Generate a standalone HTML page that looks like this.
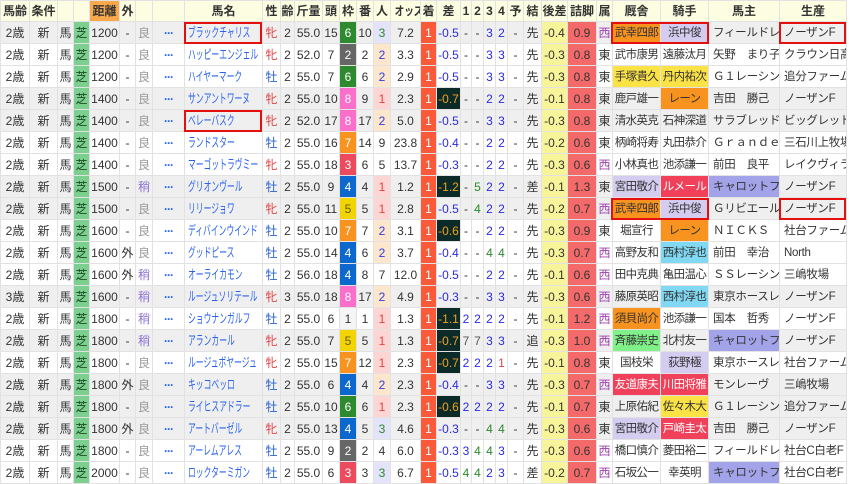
<!DOCTYPE html>
<html><head><meta charset="utf-8"><style>
*{margin:0;padding:0;box-sizing:border-box}
body{width:850px;height:482px;background:#fff;overflow:hidden;position:relative;font-family:"Liberation Sans","Noto Sans CJK JP",sans-serif;font-size:12px;color:#333}
table{border-collapse:collapse;table-layout:fixed;width:846px;position:absolute;left:0;top:0}
td,th{border:1px solid #e2e2e2;text-align:center;white-space:nowrap;overflow:hidden;height:22px;padding:0;line-height:20px}
th{background:#fdfde2;font-weight:bold;height:21px;color:#333}
th.ds{background:#f9a94b}
tr.g td{background:#efefef}
td.s,tr.g td.s{background:#7ccf8e;color:#1d4d28}
td.n{color:#2a62f0;text-align:left;padding-left:3px;font-size:13px}
.q{display:inline-block;transform:scaleX(.6);transform-origin:left center}
.q8{display:inline-block;transform:scaleX(.8);transform-origin:center}
.f{color:#e04545}.m{color:#2a62d0}
.yo{color:#999}.ya{color:#9070d8}
.dt{color:#2a62f0;font-weight:bold;letter-spacing:-1px}
td.w1{background:#f5f5f5}
td.w2,tr.g td.w2{background:#666;color:#fff}td.w3,tr.g td.w3{background:#ee4a5e;color:#fff}td.w4,tr.g td.w4{background:#0c68cc;color:#fff}
td.w5,tr.g td.w5{background:#f2d400;color:#6a5a00}td.w6,tr.g td.w6{background:#2e8a2e;color:#fff}td.w7,tr.g td.w7{background:#f7931e;color:#fff}td.w8,tr.g td.w8{background:#f96fca;color:#fff}
td.p1,tr.g td.p1{background:#fdd6d3;color:#e04545}td.p2,tr.g td.p2{background:#fde6cc;color:#2a3ee0}td.p3,tr.g td.p3{background:#e3e3fa;color:#2a8a2a}
td.c,tr.g td.c{background:#fb5a3a;color:#fff}
td.d,tr.g td.d{background:#0c2b28;color:#f0a020}
.b{color:#2a2ae8}.gr{color:#2a8a2a}.k{color:#555}.r{color:#e04545}
td.y,tr.g td.y{background:#f8f49a}
td.z,tr.g td.z{background:#f46a6a}
.ni{color:#a040b0}
td:nth-child(29),td:nth-child(30){letter-spacing:-0.6px;font-size:11.5px}
td.o,tr.g td.o{background:#f7931e}td.l,tr.g td.l{background:#d4cdf0}td.ye,tr.g td.ye{background:#fbe245}
td.rd,tr.g td.rd{background:#f0405a;color:#fff}td.cy,tr.g td.cy{background:#80d8f2}td.gn,tr.g td.gn{background:#80f088}td.pu,tr.g td.pu{background:#a3a3ea}
td.L{text-align:left;padding-left:4px;font-size:11.5px;letter-spacing:-0.3px}
.box{position:absolute;border:2px solid #e41010}
</style></head><body>
<table>
<colgroup><col style="width:29px"><col style="width:28px"><col style="width:16px"><col style="width:16px"><col style="width:30px"><col style="width:16px"><col style="width:17px"><col style="width:32px"><col style="width:78px"><col style="width:18px"><col style="width:14px"><col style="width:28px"><col style="width:17px"><col style="width:17px"><col style="width:17px"><col style="width:17px"><col style="width:30px"><col style="width:16px"><col style="width:24px"><col style="width:11px"><col style="width:12px"><col style="width:12px"><col style="width:12px"><col style="width:16px"><col style="width:18px"><col style="width:26px"><col style="width:29px"><col style="width:16px"><col style="width:48px"><col style="width:48px"><col style="width:71px"><col style="width:67px"></colgroup>
<tr><th>馬齢</th><th>条件</th><th></th><th></th><th class="ds">距離</th><th>外</th><th></th><th></th><th>馬名</th><th>性</th><th>齢</th><th>斤量</th><th>頭</th><th>枠</th><th>番</th><th>人</th><th><span class="q8">オッズ</span></th><th>着</th><th>差</th><th>1</th><th>2</th><th>3</th><th>4</th><th>予</th><th>結</th><th>後差</th><th>詰脚</th><th>属</th><th>厩舎</th><th>騎手</th><th>馬主</th><th>生産</th></tr>
<tr class="g"><td>2歳</td><td>新</td><td>馬</td><td class="s">芝</td><td>1200</td><td>-</td><td class="yo">良</td><td class="dt">···</td><td class="n"><span class="q">ブラックチャリス</span></td><td class="f">牝</td><td>2</td><td>55.0</td><td>15</td><td class="w6">6</td><td>10</td><td class="p3">3</td><td>7.2</td><td class="c">1</td><td class="b">-0.5</td><td>-</td><td>-</td><td class="b">3</td><td class="b">2</td><td>-</td><td>先</td><td class="y">-0.4</td><td class="z">0.9</td><td class="ni">西</td><td class="o">武幸四郎</td><td class="l">浜中俊</td><td class="L">フィールドレ</td><td class="L">ノーザンF</td></tr>
<tr><td>2歳</td><td>新</td><td>馬</td><td class="s">芝</td><td>1200</td><td>-</td><td class="yo">良</td><td class="dt">···</td><td class="n"><span class="q">ハッピーエンジェル</span></td><td class="f">牝</td><td>2</td><td>52.0</td><td>7</td><td class="w2">2</td><td>2</td><td class="p2">2</td><td>3.3</td><td class="c">1</td><td class="b">-0.5</td><td>-</td><td>-</td><td class="b">3</td><td class="b">3</td><td>-</td><td>先</td><td class="y">-0.3</td><td class="z">0.8</td><td>東</td><td>武市康男</td><td>遠藤汰月</td><td class="L">矢野　まり子</td><td class="L">クラウン日高</td></tr>
<tr><td>2歳</td><td>新</td><td>馬</td><td class="s">芝</td><td>1200</td><td>-</td><td class="yo">良</td><td class="dt">···</td><td class="n"><span class="q">ハイヤーマーク</span></td><td class="m">牡</td><td>2</td><td>55.0</td><td>7</td><td class="w6">6</td><td>6</td><td class="p2">2</td><td>2.9</td><td class="c">1</td><td class="b">-0.5</td><td>-</td><td>-</td><td class="b">3</td><td class="b">3</td><td>-</td><td>先</td><td class="y">-0.3</td><td class="z">0.8</td><td>東</td><td class="ye">手塚貴久</td><td class="ye">丹内祐次</td><td class="L">Ｇ１レーシン</td><td class="L">追分ファーム</td></tr>
<tr class="g"><td>2歳</td><td>新</td><td>馬</td><td class="s">芝</td><td>1400</td><td>-</td><td class="yo">良</td><td class="dt">···</td><td class="n"><span class="q">サンアントワーヌ</span></td><td class="f">牝</td><td>2</td><td>55.0</td><td>10</td><td class="w8">8</td><td>9</td><td class="p1">1</td><td>2.3</td><td class="c">1</td><td class="d">-0.7</td><td>-</td><td>-</td><td class="b">2</td><td class="b">2</td><td>-</td><td>先</td><td class="y">-0.1</td><td class="z">0.8</td><td>東</td><td>鹿戸雄一</td><td class="o">レーン</td><td class="L">吉田　勝己</td><td class="L">ノーザンF</td></tr>
<tr class="g"><td>2歳</td><td>新</td><td>馬</td><td class="s">芝</td><td>1400</td><td>-</td><td class="yo">良</td><td class="dt">···</td><td class="n"><span class="q">ベレーバスク</span></td><td class="f">牝</td><td>2</td><td>52.0</td><td>17</td><td class="w8">8</td><td>17</td><td class="p2">2</td><td>5.0</td><td class="c">1</td><td class="b">-0.5</td><td>-</td><td>-</td><td class="b">3</td><td class="b">3</td><td>-</td><td>先</td><td class="y">-0.3</td><td class="z">0.8</td><td>東</td><td>清水英克</td><td>石神深道</td><td class="L">サラブレッド</td><td class="L">ビッグレッド</td></tr>
<tr><td>2歳</td><td>新</td><td>馬</td><td class="s">芝</td><td>1400</td><td>-</td><td class="yo">良</td><td class="dt">···</td><td class="n"><span class="q">ランドスター</span></td><td class="m">牡</td><td>2</td><td>55.0</td><td>16</td><td class="w7">7</td><td>14</td><td>9</td><td>23.8</td><td class="c">1</td><td class="b">-0.4</td><td>-</td><td>-</td><td class="b">2</td><td class="b">2</td><td>-</td><td>先</td><td class="y">-0.2</td><td class="z">0.6</td><td>東</td><td>柄崎将寿</td><td>丸田恭介</td><td class="L">Ｇｒａｎｄｅ</td><td class="L">三石川上牧場</td></tr>
<tr><td>2歳</td><td>新</td><td>馬</td><td class="s">芝</td><td>1400</td><td>-</td><td class="yo">良</td><td class="dt">···</td><td class="n"><span class="q">マーゴットラヴミー</span></td><td class="f">牝</td><td>2</td><td>55.0</td><td>18</td><td class="w3">3</td><td>6</td><td>5</td><td>13.7</td><td class="c">1</td><td class="b">-0.3</td><td>-</td><td>-</td><td class="b">2</td><td class="b">2</td><td>-</td><td>先</td><td class="y">-0.3</td><td class="z">0.6</td><td class="ni">西</td><td>小林真也</td><td>池添謙一</td><td class="L">前田　良平</td><td class="L">レイクヴィラ</td></tr>
<tr class="g"><td>2歳</td><td>新</td><td>馬</td><td class="s">芝</td><td>1500</td><td>-</td><td class="ya">稍</td><td class="dt">···</td><td class="n"><span class="q">グリオンヴール</span></td><td class="m">牡</td><td>2</td><td>55.0</td><td>9</td><td class="w4">4</td><td>4</td><td class="p1">1</td><td>1.2</td><td class="c">1</td><td class="d">-1.2</td><td>-</td><td class="gr">5</td><td class="b">2</td><td class="b">2</td><td>-</td><td>差</td><td class="y">-0.1</td><td class="z">1.3</td><td>東</td><td class="l">宮田敬介</td><td class="rd">ルメール</td><td class="L pu">キャロットフ</td><td class="L">ノーザンF</td></tr>
<tr class="g"><td>2歳</td><td>新</td><td>馬</td><td class="s">芝</td><td>1500</td><td>-</td><td class="yo">良</td><td class="dt">···</td><td class="n"><span class="q">リリージョワ</span></td><td class="f">牝</td><td>2</td><td>55.0</td><td>11</td><td class="w5">5</td><td>5</td><td class="p1">1</td><td>2.8</td><td class="c">1</td><td class="b">-0.5</td><td>-</td><td class="gr">4</td><td class="b">2</td><td class="b">2</td><td>-</td><td>先</td><td class="y">-0.2</td><td class="z">0.7</td><td class="ni">西</td><td class="o">武幸四郎</td><td class="l">浜中俊</td><td class="L">Ｇリビエール</td><td class="L">ノーザンF</td></tr>
<tr><td>2歳</td><td>新</td><td>馬</td><td class="s">芝</td><td>1600</td><td>-</td><td class="yo">良</td><td class="dt">···</td><td class="n"><span class="q">ディバインウインド</span></td><td class="m">牡</td><td>2</td><td>55.0</td><td>10</td><td class="w7">7</td><td>7</td><td class="p2">2</td><td>3.1</td><td class="c">1</td><td class="d">-0.6</td><td>-</td><td>-</td><td class="b">2</td><td class="b">2</td><td>-</td><td>先</td><td class="y">-0.3</td><td class="z">0.9</td><td>東</td><td>堀宣行</td><td class="o">レーン</td><td class="L">ＮＩＣＫＳ</td><td class="L">社台ファーム</td></tr>
<tr><td>2歳</td><td>新</td><td>馬</td><td class="s">芝</td><td>1600</td><td>外</td><td class="yo">良</td><td class="dt">···</td><td class="n"><span class="q">グッドピース</span></td><td class="m">牡</td><td>2</td><td>55.0</td><td>14</td><td class="w4">4</td><td>6</td><td class="p2">2</td><td>3.7</td><td class="c">1</td><td class="b">-0.4</td><td>-</td><td>-</td><td class="gr">4</td><td class="gr">4</td><td>-</td><td>先</td><td class="y">-0.3</td><td class="z">0.7</td><td class="ni">西</td><td>高野友和</td><td class="cy">西村淳也</td><td class="L">前田　幸治</td><td class="L">North</td></tr>
<tr><td>2歳</td><td>新</td><td>馬</td><td class="s">芝</td><td>1600</td><td>外</td><td class="ya">稍</td><td class="dt">···</td><td class="n"><span class="q">オーライカモン</span></td><td class="m">牡</td><td>2</td><td>56.0</td><td>18</td><td class="w4">4</td><td>8</td><td>7</td><td>12.0</td><td class="c">1</td><td class="b">-0.5</td><td>-</td><td>-</td><td class="b">2</td><td class="b">2</td><td>-</td><td>先</td><td class="y">-0.1</td><td class="z">0.6</td><td class="ni">西</td><td>田中克典</td><td>亀田温心</td><td class="L">ＳＳレーシン</td><td class="L">三嶋牧場</td></tr>
<tr class="g"><td>3歳</td><td>新</td><td>馬</td><td class="s">芝</td><td>1600</td><td>-</td><td class="ya">稍</td><td class="dt">···</td><td class="n"><span class="q">ルージュソリテール</span></td><td class="f">牝</td><td>3</td><td>55.0</td><td>18</td><td class="w8">8</td><td>17</td><td class="p2">2</td><td>4.9</td><td class="c">1</td><td class="b">-0.3</td><td>-</td><td>-</td><td class="b">3</td><td class="b">3</td><td>-</td><td>先</td><td class="y">-0.3</td><td class="z">0.6</td><td class="ni">西</td><td>藤原英昭</td><td class="cy">西村淳也</td><td class="L">東京ホースレ</td><td class="L">ノーザンF</td></tr>
<tr><td>2歳</td><td>新</td><td>馬</td><td class="s">芝</td><td>1800</td><td>-</td><td class="ya">稍</td><td class="dt">···</td><td class="n"><span class="q">ショウナンガルフ</span></td><td class="m">牡</td><td>2</td><td>55.0</td><td>6</td><td class="w1">1</td><td>1</td><td class="p1">1</td><td>1.3</td><td class="c">1</td><td class="d">-1.1</td><td class="b">2</td><td class="b">2</td><td class="b">2</td><td class="b">2</td><td>-</td><td>先</td><td class="y">-0.1</td><td class="z">1.2</td><td class="ni">西</td><td class="o">須貝尚介</td><td>池添謙一</td><td class="L">国本　哲秀</td><td class="L">ノーザンF</td></tr>
<tr class="g"><td>2歳</td><td>新</td><td>馬</td><td class="s">芝</td><td>1800</td><td>-</td><td class="ya">稍</td><td class="dt">···</td><td class="n"><span class="q">アランカール</span></td><td class="f">牝</td><td>2</td><td>55.0</td><td>7</td><td class="w5">5</td><td>5</td><td class="p1">1</td><td>1.3</td><td class="c">1</td><td class="d">-0.7</td><td class="k">7</td><td class="k">7</td><td class="b">3</td><td class="b">3</td><td>-</td><td>追</td><td class="y">-0.3</td><td class="z">1.0</td><td class="ni">西</td><td class="gn">斉藤崇史</td><td>北村友一</td><td class="L pu">キャロットフ</td><td class="L">ノーザンF</td></tr>
<tr><td>2歳</td><td>新</td><td>馬</td><td class="s">芝</td><td>1800</td><td>-</td><td class="yo">良</td><td class="dt">···</td><td class="n"><span class="q">ルージュボヤージュ</span></td><td class="f">牝</td><td>2</td><td>55.0</td><td>15</td><td class="w7">7</td><td>12</td><td class="p1">1</td><td>2.3</td><td class="c">1</td><td class="d">-0.7</td><td class="b">2</td><td class="b">2</td><td class="b">2</td><td class="r">1</td><td>-</td><td>先</td><td class="y">-0.1</td><td class="z">0.8</td><td>東</td><td>国枝栄</td><td class="l">荻野極</td><td class="L">東京ホースレ</td><td class="L">社台ファーム</td></tr>
<tr class="g"><td>2歳</td><td>新</td><td>馬</td><td class="s">芝</td><td>1800</td><td>外</td><td class="yo">良</td><td class="dt">···</td><td class="n"><span class="q">キッコベッロ</span></td><td class="m">牡</td><td>2</td><td>55.0</td><td>6</td><td class="w4">4</td><td>4</td><td class="p2">2</td><td>2.3</td><td class="c">1</td><td class="b">-0.4</td><td>-</td><td>-</td><td class="b">3</td><td class="b">3</td><td>-</td><td>先</td><td class="y">-0.3</td><td class="z">0.7</td><td class="ni">西</td><td class="rd">友道康夫</td><td class="rd">川田将雅</td><td class="L">モンレーヴ</td><td class="L">三嶋牧場</td></tr>
<tr class="g"><td>2歳</td><td>新</td><td>馬</td><td class="s">芝</td><td>1800</td><td>-</td><td class="yo">良</td><td class="dt">···</td><td class="n"><span class="q">ライヒスアドラー</span></td><td class="m">牡</td><td>2</td><td>55.0</td><td>10</td><td class="w6">6</td><td>6</td><td class="p1">1</td><td>2.3</td><td class="c">1</td><td class="d">-0.6</td><td class="b">2</td><td class="b">2</td><td class="b">2</td><td class="b">2</td><td>-</td><td>先</td><td class="y">-0.1</td><td class="z">0.7</td><td>東</td><td>上原佑紀</td><td class="ye">佐々木大</td><td class="L">Ｇ１レーシン</td><td class="L">追分ファーム</td></tr>
<tr class="g"><td>2歳</td><td>新</td><td>馬</td><td class="s">芝</td><td>1800</td><td>外</td><td class="yo">良</td><td class="dt">···</td><td class="n"><span class="q">アートバーゼル</span></td><td class="f">牝</td><td>2</td><td>55.0</td><td>13</td><td class="w4">4</td><td>5</td><td class="p3">3</td><td>4.6</td><td class="c">1</td><td class="b">-0.3</td><td>-</td><td>-</td><td class="gr">4</td><td class="gr">4</td><td>-</td><td>先</td><td class="y">-0.3</td><td class="z">0.6</td><td>東</td><td class="l">宮田敬介</td><td class="rd">戸崎圭太</td><td class="L">吉田　勝己</td><td class="L">ノーザンF</td></tr>
<tr><td>2歳</td><td>新</td><td>馬</td><td class="s">芝</td><td>1800</td><td>-</td><td class="yo">良</td><td class="dt">···</td><td class="n"><span class="q">アーレムアレス</span></td><td class="m">牡</td><td>2</td><td>55.0</td><td>9</td><td class="w2">2</td><td>2</td><td>4</td><td>6.0</td><td class="c">1</td><td class="b">-0.3</td><td class="b">3</td><td class="gr">4</td><td class="gr">4</td><td class="b">3</td><td>-</td><td>先</td><td class="y">-0.3</td><td class="z">0.6</td><td class="ni">西</td><td>橋口慎介</td><td>菱田裕二</td><td class="L">フィールドレ</td><td class="L">社台C白老F</td></tr>
<tr><td>2歳</td><td>新</td><td>馬</td><td class="s">芝</td><td>2000</td><td>-</td><td class="yo">良</td><td class="dt">···</td><td class="n"><span class="q">ロックターミガン</span></td><td class="m">牡</td><td>2</td><td>55.0</td><td>6</td><td class="w3">3</td><td>3</td><td class="p3">3</td><td>6.7</td><td class="c">1</td><td class="b">-0.5</td><td class="gr">4</td><td class="gr">4</td><td class="b">2</td><td class="b">3</td><td>-</td><td>差</td><td class="y">-0.2</td><td class="z">0.7</td><td class="ni">西</td><td>石坂公一</td><td>幸英明</td><td class="L pu">キャロットフ</td><td class="L">社台C白老F</td></tr>
</table>
<div class="box" style="left:184px;top:22px;width:78px;height:22px"></div>
<div class="box" style="left:611px;top:22px;width:98px;height:22px"></div>
<div class="box" style="left:779px;top:22px;width:67px;height:22px"></div>
<div class="box" style="left:184px;top:110px;width:78px;height:22px"></div>
<div class="box" style="left:611px;top:198px;width:98px;height:22px"></div>
<div class="box" style="left:779px;top:198px;width:67px;height:22px"></div>
</body></html>
